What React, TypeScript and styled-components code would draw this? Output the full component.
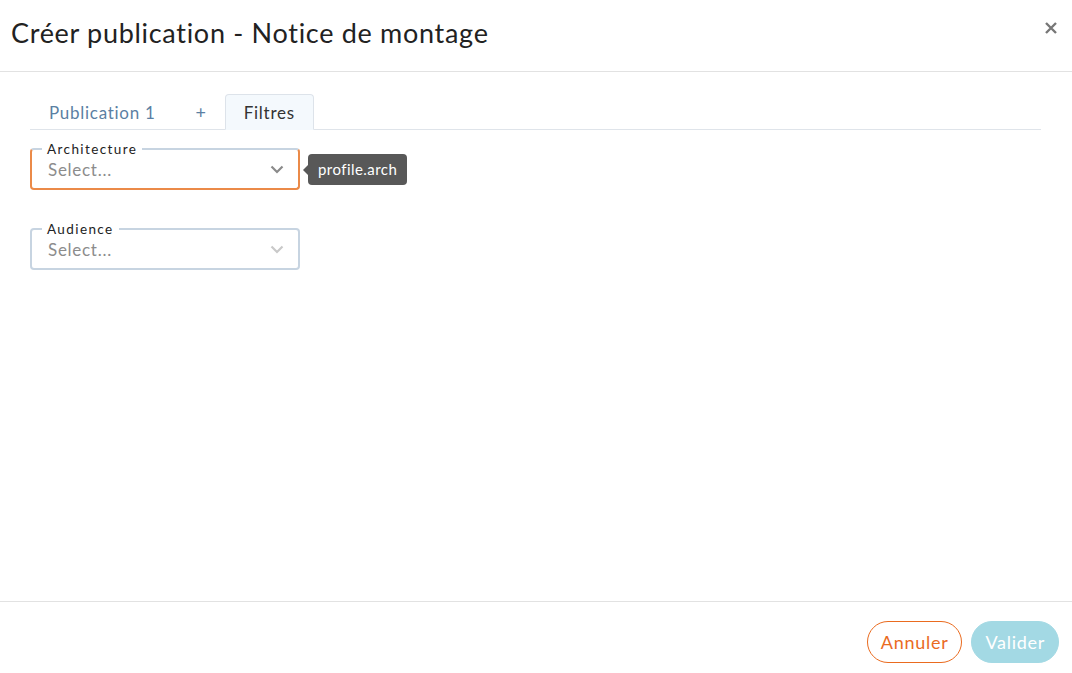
import styled, { createGlobalStyle } from "styled-components";

const GlobalStyle = createGlobalStyle`
    html, body {
        margin: 0;
        padding: 0;
        background: #ffffff;
    }
    body {
        font-family: Lato, "Noto Sans", "Liberation Sans", sans-serif;
        letter-spacing: 0.045em;
        color: #222;
    }
`;

const Modal = styled.div`
    display: flex;
    flex-direction: column;
    width: 1072px;
    height: 673px;
    background: #fff;
`;

const Header = styled.header`
    display: flex;
    align-items: center;
    justify-content: space-between;
    height: 71px;
    padding: 0 15px 0 11px;
    border-bottom: 1px solid #e2e2e2;
    box-sizing: content-box;
`;

const Title = styled.h1`
    margin: 0;
    margin-top: -7px;
    font-size: 27px;
    letter-spacing: 0.7px;
    font-weight: 400;
    color: #222;
`;

const CloseButton = styled.button`
    border: none;
    background: none;
    padding: 0;
    margin-top: -16px;
    cursor: pointer;
    color: #777;
    display: flex;
`;

const Body = styled.main`
    flex: 1;
    padding: 21px 31px 0 30px;
`;

const TabBar = styled.div`
    display: flex;
    align-items: flex-end;
    height: 36px;
    border-bottom: 1px solid #dfe4ea;
`;

const Tab = styled.button<{ $active?: boolean }>`
    height: 36px;
    padding: 0 18px;
    margin-bottom: -1px;
    font-family: inherit;
    letter-spacing: inherit;
    font-size: 17px;
    color: ${(p) => (p.$active ? "#333" : "#5b7fa3")};
    background: ${(p) => (p.$active ? "#f4f9fd" : "transparent")};
    border: 1px solid ${(p) => (p.$active ? "#dde3ea" : "transparent")};
    border-bottom-color: ${(p) => (p.$active ? "#f4f9fd" : "transparent")};
    border-radius: 4px 4px 0 0;
    cursor: pointer;
`;

const AddTab = styled(Tab)`
    padding: 0 17px 0 20px;
    font-size: 18px;
`;

const Form = styled.div`
    display: flex;
    flex-direction: column;
    gap: 38px;
    padding-top: 18px;
`;

const FieldRow = styled.div`
    display: flex;
    align-items: center;
    gap: 8px;
`;

const Field = styled.fieldset<{ $focused?: boolean }>`
    position: relative;
    width: 270px;
    height: 42px;
    margin: 0;
    padding: 0 14px 0 16px;
    box-sizing: border-box;
    border: 2px solid #c7d4e1;
    border-color: ${(p) =>
        p.$focused ? "#c7d4e1 #eb8a48 #eb8a48 #eb8a48" : "#c7d4e1"};
    border-radius: 4px;
    display: flex;
    align-items: center;
    justify-content: space-between;
`;

const Legend = styled.legend`
    position: absolute;
    top: -8px;
    left: 10px;
    padding: 0 5px;
    background: #fff;
    font-size: 13.5px;
    letter-spacing: 1.4px;
    line-height: 14px;
    color: #222;
`;

const Placeholder = styled.span`
    font-size: 17px;
    color: #8c8c8c;
    margin-top: 1px;
`;

const Chevron = styled.svg<{ $muted?: boolean }>`
    color: ${(p) => (p.$muted ? "#c9c9c9" : "#8a8a8a")};
    margin-top: 1px;
`;

const Tooltip = styled.div`
    position: relative;
    background: #585858;
    color: #fff;
    font-size: 15px;
    letter-spacing: 0.03em;
    height: 31px;
    line-height: 31px;
    padding: 0 10px;
    border-radius: 4px;

    &::before {
        content: "";
        position: absolute;
        left: -5px;
        top: 10px;
        border-top: 6px solid transparent;
        border-bottom: 6px solid transparent;
        border-right: 6px solid #585858;
    }
`;

const Footer = styled.footer`
    display: flex;
    justify-content: flex-end;
    align-items: flex-start;
    gap: 9px;
    height: 72px;
    padding: 19px 13px 0;
    box-sizing: border-box;
    border-top: 1px solid #e2e2e2;
`;

const Button = styled.button<{ $primary?: boolean }>`
    height: 42px;
    padding: 0 13px;
    border-radius: 21px;
    font-family: inherit;
    letter-spacing: inherit;
    font-size: 18px;
    color: ${(p) => (p.$primary ? "#fff" : "#ea6b1f")};
    background: ${(p) => (p.$primary ? "#a3d9e4" : "#fff")};
    border: 1px solid ${(p) => (p.$primary ? "#a3d9e4" : "#ea6b1f")};
    cursor: pointer;
`;

function ChevronDown({ muted }: { muted?: boolean }) {
    return (
        <Chevron $muted={muted} width="14" height="9" viewBox="0 0 14 9">
            <path d="M1.5 1.5 L7 7 L12.5 1.5" fill="none" stroke="currentColor" strokeWidth="2.2" />
        </Chevron>
    );
}

function App() {
    return (
        <>
            <GlobalStyle />
            <Modal>
                <Header>
                    <Title>Créer publication - Notice de montage</Title>
                    <CloseButton aria-label="close">
                        <svg width="12" height="12" viewBox="0 0 12 12">
                            <path d="M1 1 L11 11 M11 1 L1 11" stroke="currentColor" strokeWidth="2.4" />
                        </svg>
                    </CloseButton>
                </Header>
                <Body>
                    <TabBar>
                        <Tab>Publication 1</Tab>
                        <AddTab>+</AddTab>
                        <Tab $active>Filtres</Tab>
                    </TabBar>
                    <Form>
                        <FieldRow>
                            <Field $focused>
                                <Legend>Architecture</Legend>
                                <Placeholder>Select...</Placeholder>
                                <ChevronDown />
                            </Field>
                            <Tooltip>profile.arch</Tooltip>
                        </FieldRow>
                        <FieldRow>
                            <Field>
                                <Legend>Audience</Legend>
                                <Placeholder>Select...</Placeholder>
                                <ChevronDown muted />
                            </Field>
                        </FieldRow>
                    </Form>
                </Body>
                <Footer>
                    <Button>Annuler</Button>
                    <Button $primary>Valider</Button>
                </Footer>
            </Modal>
        </>
    );
}

export default App;
